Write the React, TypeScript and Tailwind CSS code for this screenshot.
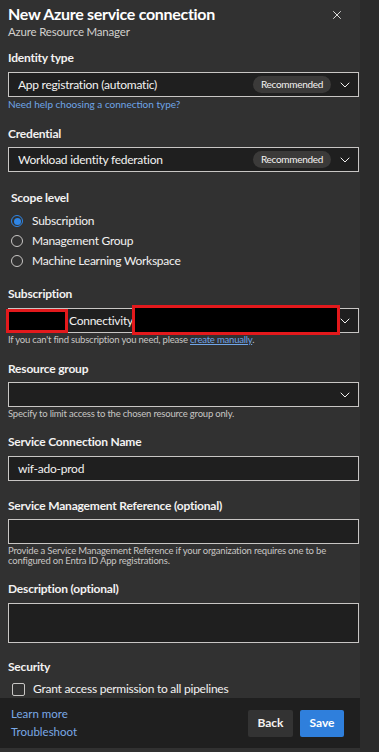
import { X, ChevronDown } from 'lucide-react'

const font = { fontFamily: 'Lato, "Noto Sans", sans-serif' }

function Label({ text, className = '' }: { text: string; className?: string }) {
  return (
    <p className={`text-[12px] leading-[18px] font-bold tracking-[-0.2px] text-[#f3f2f1] ${className}`}>
      {text}
    </p>
  )
}

function Pill() {
  return (
    <span className="px-[8px] h-[17px] flex items-center rounded-full bg-[#3b3a39] text-[10px] tracking-[-0.3px] text-[#f3f2f1]">
      Recommended
    </span>
  )
}

function Select({
  value,
  recommended,
  className = '',
}: {
  value?: string
  recommended?: boolean
  className?: string
}) {
  return (
    <div
      className={`h-[25px] border border-[#c8c6c4] bg-[#1f1f1f] flex items-center pl-[9px] pr-[5px] ${className}`}
    >
      <span className="flex-1 text-[12px] tracking-[-0.25px] text-[#f3f2f1] truncate">{value}</span>
      {recommended && <Pill />}
      <ChevronDown size={16} strokeWidth={1.5} className="ml-[6px] text-[#f3f2f1]" />
    </div>
  )
}

function Radio({ label, checked }: { label: string; checked?: boolean }) {
  return (
    <div className="h-[20px] flex items-center gap-[9px]">
      <span
        className={`w-[12px] h-[12px] rounded-full border flex items-center justify-center ${
          checked ? 'border-[#2f86e6]' : 'border-[#c8c6c4]'
        }`}
      >
        {checked && <span className="w-[7px] h-[7px] rounded-full bg-[#2f86e6]" />}
      </span>
      <span className="text-[12px] tracking-[-0.25px] text-[#f3f2f1]">{label}</span>
    </div>
  )
}

export default function App() {
  return (
    <main className="w-[379px] h-[752px] flex bg-[#2b2b2b] overflow-hidden" style={font}>
      <div className="w-[360px] h-full bg-[#313131] flex flex-col">
        <div className="pl-2 pr-[1px] flex-1">
          <div className="flex items-start pt-[3px]">
            <h1 className="flex-1 text-[16px] leading-[22px] font-bold tracking-[-0.3px] text-white">
              New Azure service connection
            </h1>
            <X size={14} strokeWidth={1.5} className="mt-[5px] mr-[15px] text-[#f3f2f1]" />
          </div>
          <p className="text-[11.5px] leading-[14px] tracking-[-0.2px] text-[#d2d0ce]">
            Azure Resource Manager
          </p>

          <Label text="Identity type" className="mt-[10px]" />
          <Select value="App registration (automatic)" recommended className="mt-[5px]" />
          <p className="text-[10px] leading-[14px] text-[#6fa5e8]">
            Need help choosing a connection type?
          </p>

          <Label text="Credential" className="mt-[14px]" />
          <Select value="Workload identity federation" recommended className="mt-[4px]" />

          <div className="pl-[3px]">
            <Label text="Scope level" className="mt-[17px]" />
            <div className="mt-[4px]">
              <Radio label="Subscription" checked />
              <Radio label="Management Group" />
              <Radio label="Machine Learning Workspace" />
            </div>
          </div>

          <Label text="Subscription" className="mt-[14px]" />
          <div className="relative mt-[5px]">
            <Select value="" />
            <span className="absolute left-[61px] top-[4px] text-[12px] tracking-[-0.25px] text-[#f3f2f1]">
              Connectivity
            </span>
            <div className="absolute left-[-2px] top-[1px] w-[62px] h-[24px] bg-black border-[3px] border-[#e3191c]" />
            <div className="absolute left-[124px] top-[-3px] w-[208px] h-[30px] bg-black border-[3px] border-[#e3191c]" />
          </div>
          <p className="text-[9.5px] leading-[13px] tracking-[-0.2px] text-[#c8c6c4]">
            If you can't find subscription you need, please{' '}
            <span className="text-[#6fa5e8] underline">create manually</span>.
          </p>

          <Label text="Resource group" className="mt-[14px]" />
          <Select value="" className="mt-[4px]" />
          <p className="text-[9.5px] leading-[13px] tracking-[-0.2px] text-[#c8c6c4]">
            Specify to limit access to the chosen resource group only.
          </p>

          <Label text="Service Connection Name" className="mt-[13px]" />
          <div className="mt-[5px] h-[25px] border border-[#c8c6c4] bg-[#1f1f1f] flex items-center pl-[9px] text-[12px] tracking-[-0.25px] text-[#f3f2f1]">
            wif-ado-prod
          </div>

          <Label text="Service Management Reference (optional)" className="mt-[16px]" />
          <div className="mt-[4px] h-[25px] border border-[#c8c6c4] bg-[#1f1f1f]" />
          <p className="mt-[2px] text-[9.5px] leading-[10px] tracking-[-0.2px] text-[#c8c6c4] pr-[30px]">
            Provide a Service Management Reference if your organization requires one to be
            configured on Entra ID App registrations.
          </p>

          <Label text="Description (optional)" className="mt-[14px]" />
          <div className="mt-[5px] h-[40px] border border-[#c8c6c4] bg-[#1f1f1f]" />

          <Label text="Security" className="mt-[15px]" />
          <div className="mt-[4px] h-[18px] flex items-center pl-[4px] gap-[8px]">
            <span className="w-[13px] h-[13px] rounded-[2px] border border-[#c8c6c4]" />
            <span className="text-[12px] tracking-[-0.25px] text-[#f3f2f1]">
              Grant access permission to all pipelines
            </span>
          </div>
        </div>

        <div className="h-[50px] bg-[#1f1f1f] flex items-center pl-[11px] pr-[16px] mb-[4px]">
          <div className="flex-1 flex flex-col text-[11.5px] leading-[18px] text-[#7aa9e6]">
            <span>Learn more</span>
            <span>Troubleshoot</span>
          </div>
          <button className="h-[27px] w-[45px] bg-[#333333] text-[12px] font-bold text-[#f3f2f1] rounded-[2px]">
            Back
          </button>
          <button className="ml-[7px] h-[27px] w-[44px] bg-[#2f7fdc] text-[12px] font-bold text-white rounded-[2px]">
            Save
          </button>
        </div>
      </div>
      <div className="flex-1" />
    </main>
  )
}
